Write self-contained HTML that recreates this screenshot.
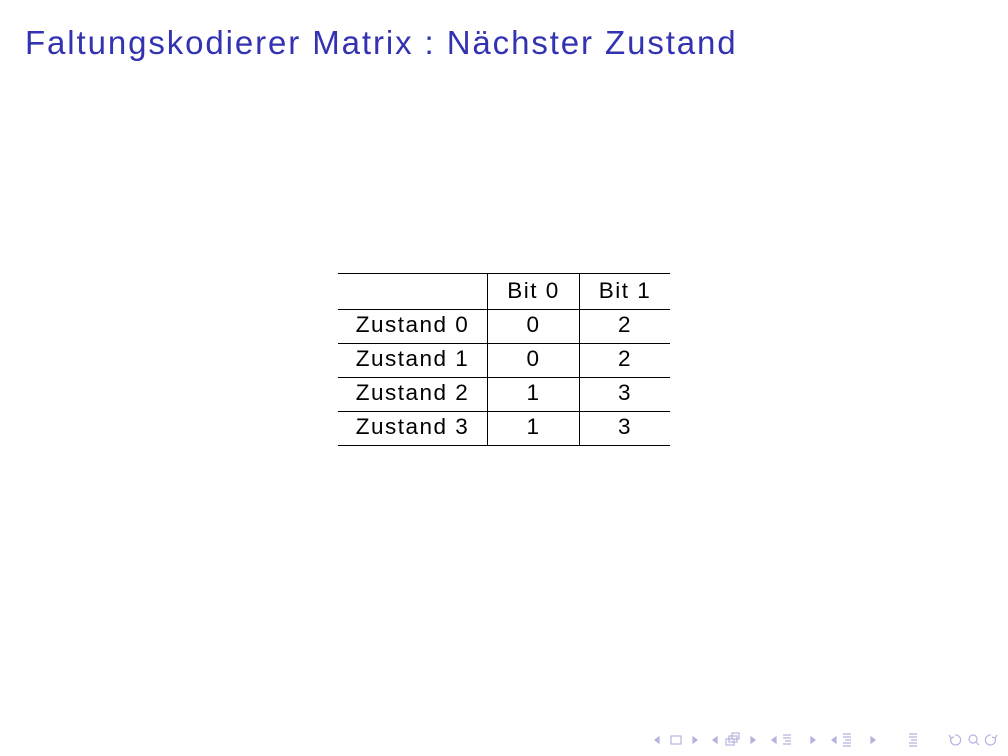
<!DOCTYPE html>
<html><head><meta charset="utf-8"><style>
body{margin:0;width:1008px;height:756px;background:#fff;position:relative;overflow:hidden;font-family:"Liberation Sans",sans-serif}
h1{position:absolute;left:25px;top:24px;margin:0;font-weight:normal;font-size:33px;letter-spacing:1.9px;color:#3333b2;white-space:nowrap}
.h{position:absolute;background:#000;height:1px}
.v{position:absolute;background:#000;width:1px}
.t{position:absolute;font-size:22.5px;letter-spacing:1.5px;color:#000;text-align:center;line-height:34px;height:34px}
</style></head><body>
<h1>Faltungskodierer Matrix : Nächster Zustand</h1>
<div class="h" style="left:338px;width:332px;top:273px"></div>
<div class="h" style="left:338px;width:332px;top:309px"></div>
<div class="h" style="left:338px;width:332px;top:343px"></div>
<div class="h" style="left:338px;width:332px;top:377px"></div>
<div class="h" style="left:338px;width:332px;top:411px"></div>
<div class="h" style="left:338px;width:332px;top:445px"></div>
<div class="v" style="left:487px;top:273px;height:173px"></div>
<div class="v" style="left:579px;top:273px;height:173px"></div>
<div class="t" style="left:488px;width:91px;top:274px">Bit 0</div>
<div class="t" style="left:580px;width:90px;top:274px">Bit 1</div>
<div class="t" style="left:338px;width:149px;top:308px">Zustand 0</div>
<div class="t" style="left:488px;width:91px;top:308px">0</div>
<div class="t" style="left:580px;width:90px;top:308px">2</div>
<div class="t" style="left:338px;width:149px;top:342px">Zustand 1</div>
<div class="t" style="left:488px;width:91px;top:342px">0</div>
<div class="t" style="left:580px;width:90px;top:342px">2</div>
<div class="t" style="left:338px;width:149px;top:376px">Zustand 2</div>
<div class="t" style="left:488px;width:91px;top:376px">1</div>
<div class="t" style="left:580px;width:90px;top:376px">3</div>
<div class="t" style="left:338px;width:149px;top:410px">Zustand 3</div>
<div class="t" style="left:488px;width:91px;top:410px">1</div>
<div class="t" style="left:580px;width:90px;top:410px">3</div>
<svg style="position:absolute;left:645px;top:725px" width="360" height="30" viewBox="0 0 360 30" fill="none" stroke="#b3b3dd" stroke-width="1.2">
<path d="M10 15l4-3v6z" fill="#b3b3dd"/><rect x="26" y="11" width="10" height="8"/><path d="M48 12l4 3-4 3z" fill="#b3b3dd"/>
<path d="M68 15l4-3v6z" fill="#b3b3dd"/><rect x="81" y="14" width="8" height="6"/><rect x="84" y="11" width="8" height="6"/><rect x="87" y="8" width="7" height="6"/><path d="M106 12l4 3-4 3z" fill="#b3b3dd"/>
<path d="M127 15l4-3v6z" fill="#b3b3dd"/><path d="M138 10h8M138 13h8M140 16h6M138 19h8"/><path d="M166 12l4 3-4 3z" fill="#b3b3dd"/>
<path d="M187 15l4-3v6z" fill="#b3b3dd"/><path d="M198 9h8M198 12h8M200 15h6M198 18h8M198 21h8"/><path d="M226 12l4 3-4 3z" fill="#b3b3dd"/>
<path d="M264 9h8M264 12h8M266 15h6M264 18h8M264 21h8"/>
<path d="M310 10a5 5 0 1 1-4 3M304 10l2 3 3-1"/><circle cx="328" cy="14" r="4"/><path d="M331 17l3 3"/><path d="M346 10a5 5 0 1 0 4 3M352 10l-2 3-3-1"/>
</svg>
</body></html>
